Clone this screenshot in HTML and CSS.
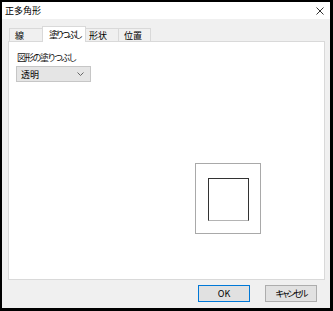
FILE: index.html
```html
<!DOCTYPE html>
<html lang="ja">
<head>
  <meta charset="UTF-8">
  <title>正多角形</title>
  <link rel="stylesheet" href="styles.css">
</head>
<body>
  <div class="window">
    <div class="titlebar">
      <span class="titlebar__text">正多角形</span>
      <svg class="titlebar__close" width="8" height="8" viewBox="0 0 8 8">
        <path d="M0.5 0.5 L7.5 7.5 M7.5 0.5 L0.5 7.5" stroke="#333" stroke-width="1" fill="none"/>
      </svg>
    </div>
    <div class="dialog">
      <div class="tabs">
        <div class="tab tab--line">線</div>
        <div class="tab tab--active"><span class="kana kana--tight">塗りつぶし</span></div>
        <div class="tab tab--shape">形状</div>
        <div class="tab tab--pos">位置</div>
      </div>
      <div class="panel">
        <div class="field__label kana">図形の塗りつぶし</div>
        <div class="select">
          <span>透明</span>
          <svg width="7" height="4" viewBox="0 0 7 4">
            <path d="M0.5 0.5 L3.5 3.5 L6.5 0.5" stroke="#666" fill="none"/>
          </svg>
        </div>
        <div class="preview">
          <div class="preview__shape"></div>
        </div>
      </div>
      <div class="footer">
        <button class="btn btn--default">OK</button>
        <button class="btn"><span class="kana kana--tight">キャンセル</span></button>
      </div>
    </div>
  </div>
</body>
</html>
```

FILE: styles.css
```css
body {
  margin: 0;
  background: #000;
  font-family: "Noto Sans CJK JP", "Noto Sans", sans-serif;
  font-feature-settings: "palt";
  font-size: 9px;
  color: #000;
}

.kana {
  letter-spacing: -1.2px;
}

.kana--tight {
  letter-spacing: -2px;
}

.window {
  margin: 2px 0 0 2px;
  width: 328px;
  height: 306px;
  background: #f0f0f0;
  display: flex;
  flex-direction: column;
}

.titlebar {
  height: 17px;
  background: #fff;
  display: flex;
  align-items: center;
  justify-content: space-between;
  padding: 0 6px 0 3px;
}

.titlebar__text {
  line-height: 1;
}

.dialog {
  flex: 1;
  display: flex;
  flex-direction: column;
  padding: 7px 5px 0 6px;
}

.tabs {
  display: flex;
  height: 15px;
  padding-left: 1px;
  align-items: flex-end;
}

.tab {
  height: 13px;
  display: flex;
  align-items: center;
  white-space: nowrap;
  border: 1px solid #d9d9d9;
  border-bottom: none;
  box-sizing: border-box;
  line-height: 1;
  flex: none;
}

.tab--line {
  width: 35px;
  padding-left: 5px;
}

.tab--active {
  width: 44px;
  height: 16px;
  margin: 0 -2px -1px -2px;
  padding: 0 0 1px 6px;
  background: #fff;
  position: relative;
  z-index: 1;
}

.tab--shape {
  width: 35px;
  padding-left: 4px;
}

.tab--pos {
  width: 33px;
  margin-left: -1px;
  padding-left: 5px;
}

.panel {
  height: 239px;
  background: #fff;
  border: 1px solid #d9d9d9;
  box-sizing: border-box;
  padding: 10px 0 0 8px;
  display: flex;
  flex-direction: column;
  align-items: flex-start;
}

.field__label {
  line-height: 11px;
  color: #111;
}

.select {
  margin: 3px 0 0 -1px;
  width: 75px;
  height: 16px;
  box-sizing: border-box;
  background: #e5e5e5;
  border: 1px solid #c6c6c6;
  display: flex;
  align-items: center;
  justify-content: space-between;
  padding: 0 6px 0 4px;
  line-height: 1;
}

.preview {
  margin: 81px 0 0 178px;
  width: 66px;
  height: 71px;
  box-sizing: border-box;
  border: 1px solid #a9a9a9;
  padding: 14px 0 0 12px;
}

.preview__shape {
  width: 41px;
  height: 43px;
  box-sizing: border-box;
  border: 1px solid #333;
  border-bottom-color: #b4b4b4;
}

.footer {
  display: flex;
  justify-content: flex-end;
  gap: 15px;
  padding: 5px 8px 0 0;
}

.btn {
  width: 52px;
  height: 17px;
  padding: 0;
  background: #e1e1e1;
  border: 1px solid #adadad;
  font: inherit;
  font-feature-settings: "palt";
  color: #000;
  line-height: 1;
}

.btn--default {
  border-color: #0078d7;
}
```
